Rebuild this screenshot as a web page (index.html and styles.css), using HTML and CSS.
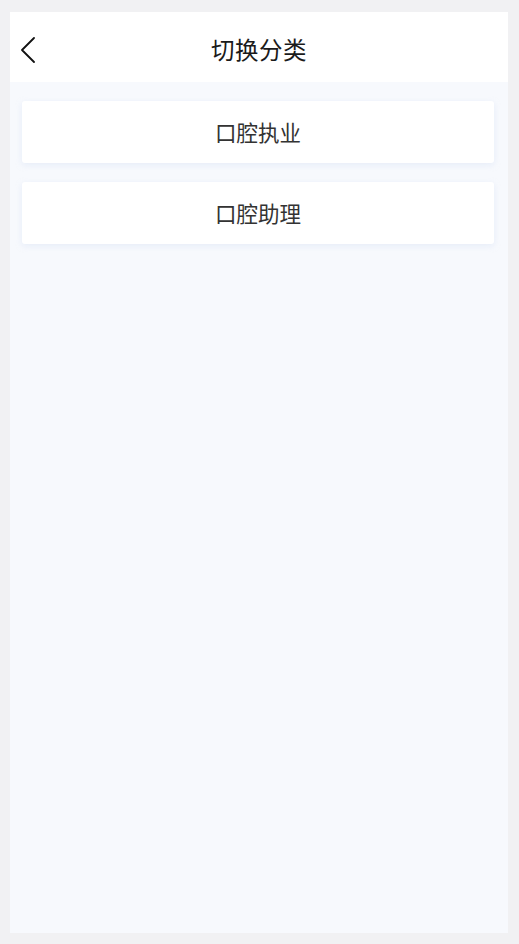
FILE: index.html
```html
<!DOCTYPE html>
<html lang="zh">
<head>
<meta charset="utf-8">
<title>切换分类</title>
<link rel="stylesheet" href="styles.css">
</head>
<body>
<div class="page">
  <header class="header">
    <span class="back">
      <svg width="16" height="26" viewBox="0 0 16 26"><path d="M14 1 L2 13 L14 25" fill="none" stroke="#111" stroke-width="1.8" stroke-linecap="round" stroke-linejoin="round"/></svg>
    </span>
    <h1 class="title">切换分类</h1>
  </header>
  <main class="list">
    <div class="card">口腔执业</div>
    <div class="card">口腔助理</div>
  </main>
</div>
</body>
</html>
```
FILE: styles.css
```css
html, body {
  margin: 0;
  padding: 0;
  background: #f1f1f3;
  font-family: "Noto Sans CJK SC", "Noto Sans", sans-serif;
}
body {
  padding: 12px 11px 11px 10px;
  height: 944px;
  box-sizing: border-box;
}
.page {
  height: 921px;
  background: #f7f9fd;
  display: flex;
  flex-direction: column;
}
.header {
  position: relative;
  height: 70px;
  background: #fff;
  display: flex;
  align-items: center;
  justify-content: center;
}
.back {
  position: absolute;
  left: 10px;
  top: 25px;
  display: flex;
}
.title {
  margin: 0;
  padding-top: 3px;
  font-size: 23.5px;
  font-weight: 400;
  color: #1a1a1a;
  letter-spacing: 0.5px;
}
.list {
  padding: 19px 14px 0 12px;
  display: flex;
  flex-direction: column;
  gap: 19px;
}
.card {
  height: 62px;
  background: #fff;
  border-radius: 3px;
  box-shadow: 0 2px 6px rgba(200, 215, 240, 0.35);
  display: flex;
  align-items: center;
  justify-content: center;
  padding-bottom: 2px;
  box-sizing: border-box;
  font-size: 21.5px;
  color: #333;
}
```
